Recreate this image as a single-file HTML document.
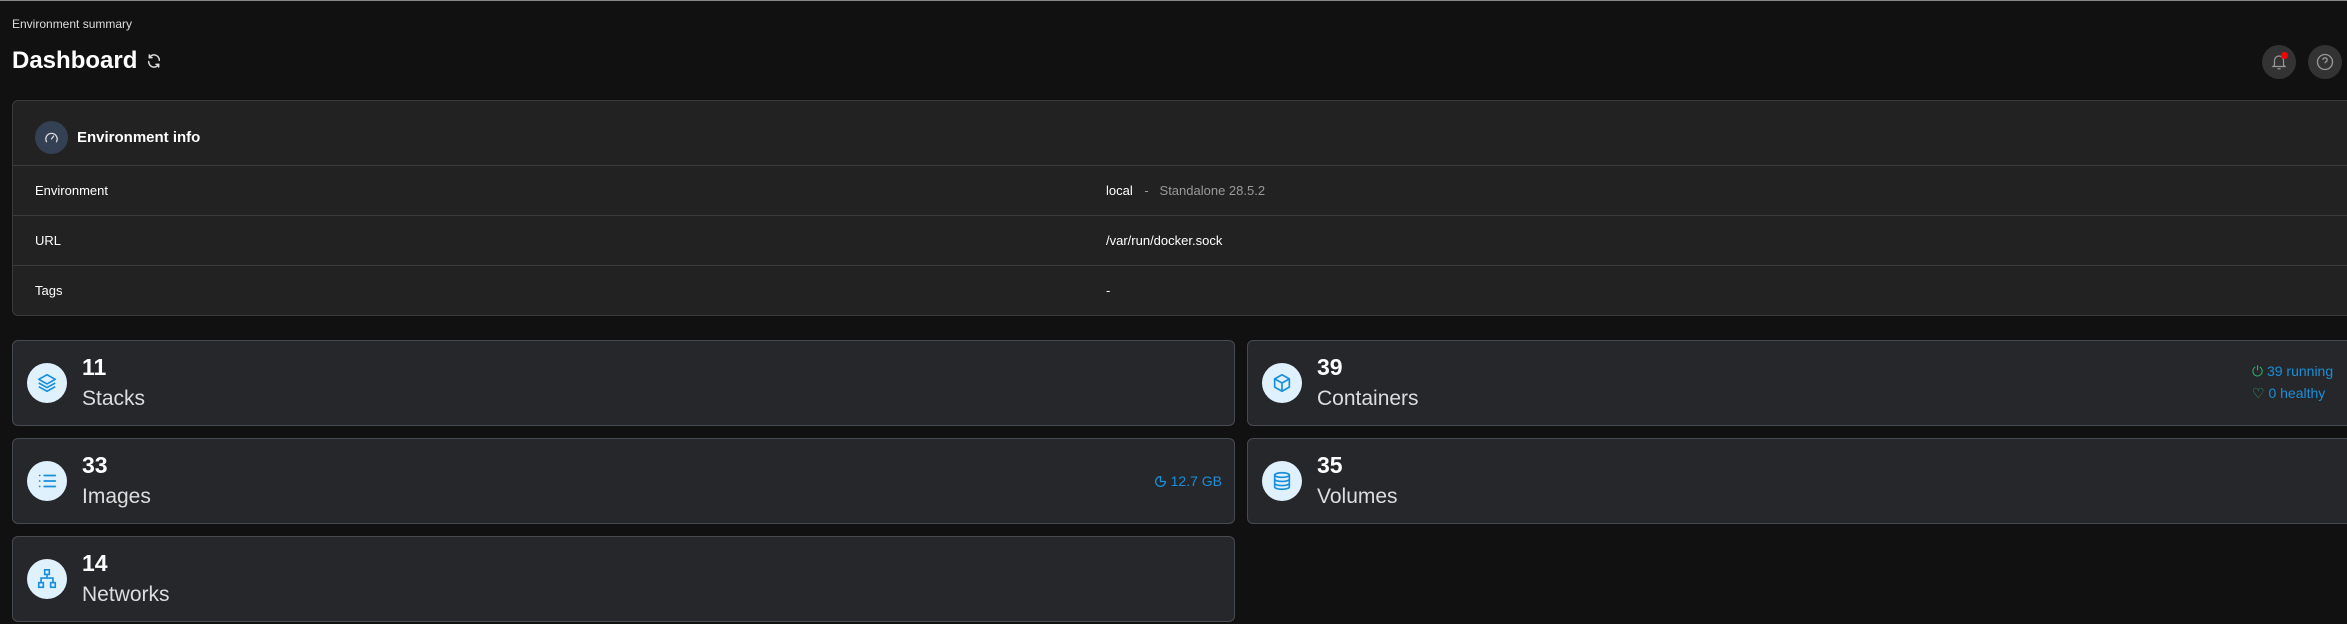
<!DOCTYPE html>
<html><head><meta charset="utf-8"><style>
*{box-sizing:border-box;margin:0;padding:0}
body{width:2347px;height:624px;overflow:hidden;background:#111111;font-family:"Liberation Sans",sans-serif;color:#fff;position:relative;border-top:1px solid #888}
.a{position:absolute}
.env{left:12px;top:99px;width:2360px;height:216px;background:#222;border:1px solid #3a3a3a;border-radius:6px}
.row{position:absolute;left:0;right:0;border-top:1px solid #3a3a3a;height:50px;font-size:13px;line-height:50px}
.row .k{position:absolute;left:22px}
.row .v{position:absolute;left:1093px}
.card{position:absolute;height:86px;background:#26272b;border:1px solid #474a50;border-radius:6px}
.ic{position:absolute;left:14px;top:22px;width:40px;height:40px;border-radius:50%;background:#dff1fd;display:flex;align-items:center;justify-content:center}
.num{position:absolute;left:69px;top:13px;font-size:23px;font-weight:bold}
.lbl{position:absolute;left:69px;top:46px;font-size:21px;color:#ddd}
.blue{color:#1a8fd9}
</style></head><body>
<div class="a" style="left:12px;top:16px;font-size:12px;color:#ddd">Environment summary</div>
<div class="a" style="left:12px;top:46px;font-size:24px;font-weight:bold">Dashboard</div>
<svg class="a" style="left:146px;top:52px" width="16" height="16" viewBox="0 0 24 24" fill="none" stroke="#ddd" stroke-width="2.2" stroke-linecap="round"><path d="M20 11A8 8 0 0 0 5 7M4 13a8 8 0 0 0 15 4"/><path d="M5 3v4h4M19 21v-4h-4"/></svg>
<div class="a" style="left:2262px;top:44px;width:34px;height:34px;border-radius:50%;background:#333"></div>
<svg class="a" style="left:2270px;top:52px" width="18" height="18" viewBox="0 0 24 24" fill="none" stroke="#999" stroke-width="1.6"><path d="M6 16V10a6 6 0 0 1 12 0v6l2 2H4z M10 21h4"/></svg>
<div class="a" style="left:2281px;top:51px;width:7px;height:7px;border-radius:50%;background:#f00"></div>
<div class="a" style="left:2308px;top:44px;width:34px;height:34px;border-radius:50%;background:#333"></div>
<svg class="a" style="left:2315px;top:51px" width="20" height="20" viewBox="0 0 24 24" fill="none" stroke="#999" stroke-width="1.6"><circle cx="12" cy="12" r="9"/><path d="M9.5 9.5a2.5 2.5 0 1 1 3.5 2.3c-.7.4-1 .9-1 1.7M12 17h.01"/></svg>

<div class="a env">
 <div class="a" style="left:22px;top:20px;width:33px;height:33px;border-radius:50%;background:#344054"></div>
 <svg class="a" style="left:30px;top:28px" width="17" height="17" viewBox="0 0 24 24" fill="none" stroke="#ddd" stroke-width="1.8" stroke-linecap="round"><path d="M5 18a8 8 0 1 1 14 0"/><path d="M12 14l3-4"/></svg>
 <div class="a" style="left:64px;top:28px;font-size:15px;font-weight:bold">Environment info</div>
 <div class="row" style="top:64px"><span class="k">Environment</span><span class="v">local <span style="color:#999;margin-left:8px">-&nbsp;&nbsp; Standalone 28.5.2</span></span></div>
 <div class="row" style="top:114px"><span class="k">URL</span><span class="v">/var/run/docker.sock</span></div>
 <div class="row" style="top:164px"><span class="k">Tags</span><span class="v">-</span></div>
</div>

<div class="card" style="left:12px;top:339px;width:1223px">
 <div class="ic"><svg width="22" height="22" viewBox="0 0 24 24" fill="none" stroke="#1a8fd9" stroke-width="1.8" stroke-linejoin="round"><path d="M12 3l9 5-9 5-9-5z"/><path d="M3 12l9 5 9-5M3 16l9 5 9-5"/></svg></div>
 <div class="num">11</div><div class="lbl">Stacks</div></div>
<div class="card" style="left:1247px;top:339px;width:1120px">
 <div class="ic"><svg width="22" height="22" viewBox="0 0 24 24" fill="none" stroke="#1a8fd9" stroke-width="1.8" stroke-linejoin="round"><path d="M12 3l8 4.5v9L12 21l-8-4.5v-9z"/><path d="M4 7.5l8 4.5 8-4.5M12 12v9"/></svg></div>
 <div class="num">39</div><div class="lbl">Containers</div>
 <div class="a blue" style="left:1004px;top:22px;font-size:14px;white-space:nowrap"><span style="color:#2fb36a">⏻</span> 39 running</div>
 <div class="a blue" style="left:1004px;top:44px;font-size:14px;white-space:nowrap"><span style="color:#2fb36a">♡</span> 0 healthy</div></div>
<div class="card" style="left:12px;top:437px;width:1223px">
 <div class="ic"><svg width="22" height="22" viewBox="0 0 24 24" fill="none" stroke="#1a8fd9" stroke-width="2" stroke-linecap="round"><path d="M9 6h12M9 12h12M9 18h12M4 6h.01M4 12h.01M4 18h.01"/></svg></div>
 <div class="num">33</div><div class="lbl">Images</div>
 <div class="a blue" style="right:12px;top:34px;font-size:14px;display:flex;align-items:center;gap:4px"><svg width="13" height="13" viewBox="0 0 24 24" fill="none" stroke="#1a8fd9" stroke-width="2.4"><path d="M21 12A9 9 0 1 1 12 3v9z"/></svg>12.7 GB</div></div>
<div class="card" style="left:1247px;top:437px;width:1120px">
 <div class="ic"><svg width="22" height="22" viewBox="0 0 24 24" fill="none" stroke="#1a8fd9" stroke-width="1.8"><ellipse cx="12" cy="5.5" rx="8" ry="2.5"/><path d="M4 5.5v13c0 1.4 3.6 2.5 8 2.5s8-1.1 8-2.5v-13M4 10c0 1.4 3.6 2.5 8 2.5s8-1.1 8-2.5M4 14.5c0 1.4 3.6 2.5 8 2.5s8-1.1 8-2.5"/></svg></div>
 <div class="num">35</div><div class="lbl">Volumes</div></div>
<div class="card" style="left:12px;top:535px;width:1223px">
 <div class="ic"><svg width="22" height="22" viewBox="0 0 24 24" fill="none" stroke="#1a8fd9" stroke-width="1.8"><rect x="9.5" y="2" width="5" height="5"/><rect x="3" y="16" width="5" height="5"/><rect x="16" y="16" width="5" height="5"/><path d="M12 7v4M5.5 16v-5h13v5"/></svg></div>
 <div class="num">14</div><div class="lbl">Networks</div></div>
</body></html>
